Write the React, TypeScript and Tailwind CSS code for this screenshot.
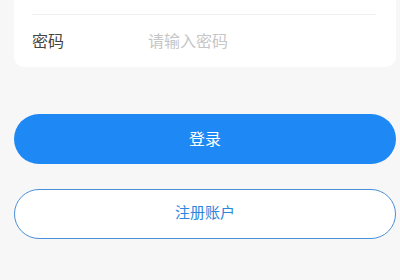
const font = { fontFamily: '"Noto Sans CJK SC", "Noto Sans", sans-serif' };

const App = (): JSX.Element => {
    return (
        <div className="w-[400px] h-[280px] overflow-hidden bg-[#f7f7f7]" style={font}>
            <div className="flex flex-col pl-[14px] pr-[4px]">
                <div className="-mt-[36px] bg-white rounded-[10px] flex flex-col">
                    {/* account row sits above the visible area */}
                    <div className="h-[51px] ml-[18px] mr-[20px] border-b border-[#f0f0f0]" />
                    <div className="flex flex-row items-center h-[52px] ml-[18px] mr-[20px] pb-[3px]">
                        <span className="w-[116px] text-[16px] text-[#444]">密码</span>
                        <span className="text-[16px] text-[#c6c6c6]">请输入密码</span>
                    </div>
                </div>

                <button className="mt-[47px] h-[50px] w-full rounded-full bg-[#1e88f5] text-white text-[16px] pb-[3px]">
                    登录
                </button>
                <button className="mt-[25px] h-[50px] w-full rounded-full bg-white border border-[#4a8fd8] text-[#2b86dc] text-[15px] pb-[3px]">
                    注册账户
                </button>
            </div>
        </div>
    );
};

export default App;
